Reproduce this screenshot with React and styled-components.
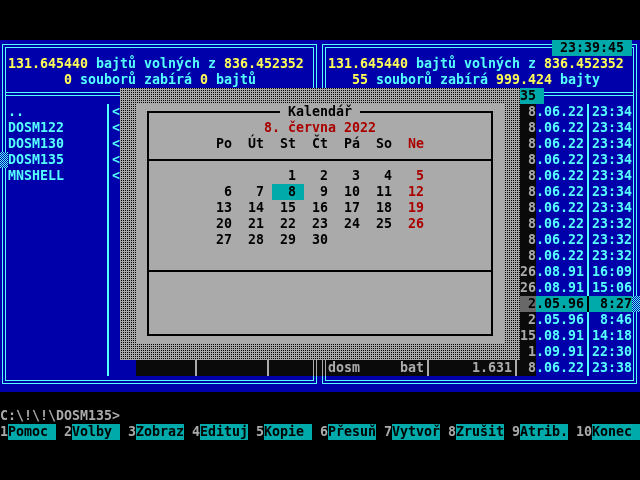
import React from "react";
import styled, { createGlobalStyle, css } from "styled-components";

// text-mode palette
const BLUE = "#0000aa";
const CYAN = "#55ffff";
const TEAL = "#00aaaa";
const YELLOW = "#ffff55";
const GRAY = "#aaaaaa";
const RED = "#aa0000";

const GlobalStyle = createGlobalStyle`
  html, body {
    margin: 0;
    padding: 0;
    background: #000;
  }
`;

const dither = css`
  background: repeating-conic-gradient(${CYAN} 0 25%, ${BLUE} 0 50%) 0 0 / 2px 2px;
`;

const Screen = styled.div`
  position: relative;
  width: 640px;
  height: 480px;
  padding-top: 40px;
  box-sizing: border-box;
  background: #000;
  color: ${GRAY};
  font-family: "DejaVu Sans Mono", "Liberation Mono", monospace;
  font-size: 13.29px;
  font-weight: bold;
  line-height: 16px;
  white-space: pre;
  overflow: hidden;
`;

const Panels = styled.div`
  display: flex;
  height: 352px;
`;

const Panel = styled.div`
  position: relative;
  width: 320px;
  background: ${BLUE};
  color: ${CYAN};

  &::before {
    content: "";
    position: absolute;
    left: 2px;
    top: 4px;
    right: 3px;
    bottom: 8px;
    box-shadow: inset 0 0 0 1px ${CYAN}, inset 0 0 0 3px ${BLUE},
      inset 0 0 0 4px ${CYAN};
  }
`;

const PanelBody = styled.div`
  position: relative;
`;

const TopRow = styled.div`
  display: flex;
  justify-content: flex-end;
  height: 16px;
  padding-right: 8px;
`;

const Clock = styled.span`
  padding: 0 8px;
  background: ${TEAL};
  color: #000;
`;

const InfoLine = styled.div`
  height: 16px;
  padding-left: ${(p) => p.$col * 8}px;
`;

const Num = styled.span`
  color: ${YELLOW};
`;

const SepRow = styled.div`
  display: flex;
  justify-content: center;
  height: 16px;
  background: linear-gradient(${CYAN}, ${CYAN}) 5px 4px / 309px 1px no-repeat,
    linear-gradient(${CYAN}, ${CYAN}) 5px 7px / 309px 1px no-repeat;
`;

const PathTitle = styled.span`
  background: ${TEAL};
  color: #000;
`;

const FileRow = styled.div`
  display: flex;
  height: 16px;
`;

const Gutter = styled.span`
  width: 8px;
  ${(p) => p.$mark && dither}
`;

const Cells = styled.div`
  display: flex;
  width: 304px;
  ${(p) =>
    p.$active &&
    css`
      background: ${TEAL};
      color: #000;
    `}
`;

const Field = styled.span`
  width: ${(p) => p.$w * 8}px;
  overflow: hidden;
  text-align: ${(p) => (p.$right ? "right" : "left")};
`;

const Bar = styled.span`
  width: 8px;
  background: linear-gradient(currentColor, currentColor) 3px 0 / 2px 100%
    no-repeat;
`;

const BlankRow = styled.div`
  height: 16px;
`;

const Prompt = styled.div`
  height: 16px;
`;

const KeyBar = styled.div`
  display: flex;
  height: 16px;
`;

const KeyItem = styled.div`
  display: flex;
  width: 64px;
`;

const KeyLabel = styled.span`
  width: 48px;
  background: ${TEAL};
  color: #000;
`;

/* dialog */

const Shade = styled.div`
  position: absolute;
  left: 136px;
  top: 104px;
  width: 400px;
  height: 272px;
  backdrop-filter: grayscale(1) brightness(0.78);
`;

const Dialog = styled.div`
  position: absolute;
  left: 120px;
  top: 88px;
  width: 400px;
  height: 272px;
  padding: 16px;
  box-sizing: border-box;
  background-color: ${GRAY};
  background-image: conic-gradient(#000 0 25%, transparent 0 100%);
  background-size: 2px 2px;
`;

const DialogFace = styled.div`
  height: 240px;
  padding: 7px 11px 8px;
  box-sizing: border-box;
  background: ${GRAY};
  color: #000;
`;

const Frame = styled.div`
  position: relative;
  height: 225px;
  box-sizing: border-box;
  border: 2px solid #000;
  padding-top: 7px;
`;

const FrameTitle = styled.div`
  position: absolute;
  top: -9px;
  left: 0;
  right: 0;
  display: flex;
  justify-content: center;
`;

const TitleText = styled.span`
  padding: 0 8px;
  background: ${GRAY};
`;

const MonthLine = styled.div`
  height: 16px;
  text-align: center;
  color: ${RED};
`;

const CalGrid = styled.div`
  display: grid;
  grid-template-columns: repeat(7, 16px);
  grid-auto-rows: 16px;
  column-gap: 16px;
  justify-content: center;
`;

const DayName = styled.span`
  color: ${(p) => (p.$sunday ? RED : "#000")};
`;

const Day = styled.span`
  text-align: right;
  color: ${(p) => (p.$sunday ? RED : "#000")};
  ${(p) =>
    p.$today &&
    css`
      background: ${TEAL};
      box-shadow: -8px 0 0 ${TEAL}, 8px 0 0 ${TEAL};
    `}
`;

const Rule = styled.div`
  height: 2px;
  margin: ${(p) => p.$m};
  background: #000;
`;

const leftFiles = [
  { name: "..", size: "<ADRESÁŘ> ", date: " 8.06.22", time: "23:39" },
  { name: "DOSM122", size: "<ADRESÁŘ> ", date: " 8.06.22", time: "23:34" },
  { name: "DOSM130", size: "<ADRESÁŘ> ", date: " 8.06.22", time: "23:34" },
  { name: "DOSM135", size: "<ADRESÁŘ> ", date: " 8.06.22", time: "23:35", mark: true },
  { name: "MNSHELL", size: "<ADRESÁŘ> ", date: " 8.06.22", time: "23:34" },
];

const rightFiles = [
  { name: "..", size: "<ADRESÁŘ> ", date: " 8.06.22", time: "23:34" },
  { name: "bin", size: "<ADRESÁŘ> ", date: " 8.06.22", time: "23:34" },
  { name: "doc", size: "<ADRESÁŘ> ", date: " 8.06.22", time: "23:34" },
  { name: "help", size: "<ADRESÁŘ> ", date: " 8.06.22", time: "23:34" },
  { name: "lang", size: "<ADRESÁŘ> ", date: " 8.06.22", time: "23:34" },
  { name: "pcx", size: "<ADRESÁŘ> ", date: " 8.06.22", time: "23:34" },
  { name: "util", size: "<ADRESÁŘ> ", date: " 8.06.22", time: "23:34" },
  { name: "dosm     exe", size: "412.880", date: " 8.06.22", time: "23:32" },
  { name: "dosm     ovl", size: "198.144", date: " 8.06.22", time: "23:32" },
  { name: "dosm     cfg", size: "2.048", date: " 8.06.22", time: "23:32" },
  { name: "ansi     sys", size: "9.029", date: "26.08.91", time: "16:09" },
  { name: "keyb     com", size: "14.727", date: "26.08.91", time: "15:06" },
  { name: "cp852    cpi", size: "23.424", date: " 2.05.96", time: " 8:27", active: true, mark: true },
  { name: "ega      cpi", size: "58.870", date: " 2.05.96", time: " 8:46" },
  { name: "mode     com", size: "23.537", date: "15.08.91", time: "14:18" },
  { name: "readme   txt", size: "5.112", date: " 1.09.91", time: "22:30" },
  { name: "dosm     bat", size: "1.631", date: " 8.06.22", time: "23:38" },
];

const keys = [
  ["1", "Pomoc"],
  ["2", "Volby"],
  ["3", "Zobraz"],
  ["4", "Edituj"],
  ["5", "Kopie"],
  ["6", "Přesuň"],
  ["7", "Vytvoř"],
  ["8", "Zrušit"],
  ["9", "Atrib."],
  ["10", "Konec"],
];

const weekDays = ["Po", "Út", "St", "Čt", "Pá", "So", "Ne"];
const weeks = [
  [null, null, 1, 2, 3, 4, 5],
  [6, 7, 8, 9, 10, 11, 12],
  [13, 14, 15, 16, 17, 18, 19],
  [20, 21, 22, 23, 24, 25, 26],
  [27, 28, 29, 30, null, null, null],
];

// center inside the 38 inner columns, the way text mode rounds it
const centerCol = (text) => 1 + Math.floor((38 - text.length) / 2);

const FileList = ({ files }) => {
  const rows = [...Array(17)].map((_, i) => files[i] || {});
  return rows.map((f, i) => (
    <FileRow key={i}>
      <Gutter $mark={f.mark && files === leftFiles} />
      <Cells $active={f.active}>
        <Field $w={12}>{f.name}</Field>
        <Bar />
        <Field $w={10} $right>{f.size}</Field>
        <Bar />
        <Field $w={8} $right>{f.date}</Field>
        <Bar />
        <Field $w={5} $right>{f.time}</Field>
      </Cells>
      <Gutter $mark={f.mark && files === rightFiles} />
    </FileRow>
  ));
};

const Calendar = () => (
  <Dialog>
    <DialogFace>
      <Frame>
        <FrameTitle>
          <TitleText>Kalendář</TitleText>
        </FrameTitle>
        <MonthLine>8. června 2022</MonthLine>
        <CalGrid>
          {weekDays.map((d, i) => (
            <DayName key={d} $sunday={i === 6}>
              {d}
            </DayName>
          ))}
        </CalGrid>
        <Rule $m="7px 0" />
        <CalGrid>
          {weeks.flat().map((d, i) => (
            <Day key={i} $sunday={i % 7 === 6} $today={d === 8}>
              {d}
            </Day>
          ))}
        </CalGrid>
        <Rule $m="22px 0 0" />
      </Frame>
    </DialogFace>
  </Dialog>
);

const App = () => {
  const leftCount = "0 souborů zabírá 0 bajtů";
  const rightCount = "55 souborů zabírá 999.424 bajty";

  return (
    <Screen>
      <GlobalStyle />
      <Panels>
        <Panel>
          <PanelBody>
            <TopRow />
            <InfoLine $col={1}>
              <Num>131.645440</Num> bajtů volných z <Num>836.452352</Num>
            </InfoLine>
            <InfoLine $col={centerCol(leftCount)}>
              <Num>0</Num> souborů zabírá <Num>0</Num> bajtů
            </InfoLine>
            <SepRow />
            <FileList files={leftFiles} />
          </PanelBody>
        </Panel>
        <Panel>
          <PanelBody>
            <TopRow>
              <Clock>23:39:45</Clock>
            </TopRow>
            <InfoLine $col={1}>
              <Num>131.645440</Num> bajtů volných z <Num>836.452352</Num>
            </InfoLine>
            <InfoLine $col={centerCol(rightCount)}>
              <Num>55</Num> souborů zabírá <Num>999.424</Num> bajty
            </InfoLine>
            <SepRow>
              <PathTitle>{" C:\\!\\!\\DOSM135 "}</PathTitle>
            </SepRow>
            <FileList files={rightFiles} />
          </PanelBody>
        </Panel>
      </Panels>
      <BlankRow />
      <Prompt>{"C:\\!\\!\\DOSM135>"}</Prompt>
      <KeyBar>
        {keys.map(([n, label]) => (
          <KeyItem key={n}>
            {n}
            <KeyLabel>{label}</KeyLabel>
          </KeyItem>
        ))}
      </KeyBar>
      <Shade />
      <Calendar />
    </Screen>
  );
};

export default App;
